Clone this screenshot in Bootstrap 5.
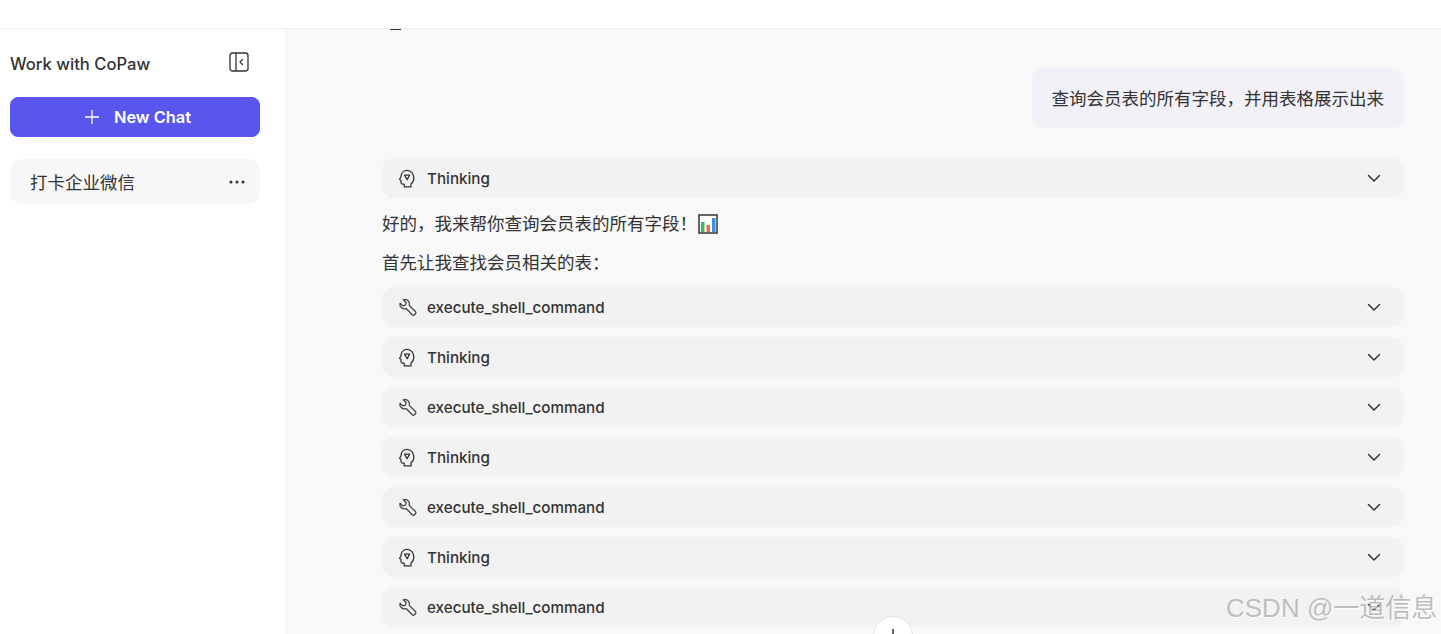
<!DOCTYPE html>
<html lang="zh">
<head>
    <meta charset="UTF-8">
    <meta name="viewport" content="width=device-width, initial-scale=1.0">
    <title>Work with CoPaw</title>
    <link href="https://cdn.jsdelivr.net/npm/bootstrap@5.3.0/dist/css/bootstrap.min.css" rel="stylesheet">
    <style>
        html, body {
            height: 100%;
        }
        body {
            font-family: Inter, "Noto Sans CJK SC", sans-serif;
            color: #333;
            background: #fff;
            overflow: hidden;
        }
        .top-strip {
            height: 29px;
            border-bottom: 1px solid #eeeeee;
        }
        .app-body {
            height: 605px;
        }
        .side-panel {
            width: 285px;
            padding: 0 25px 0 10px;
        }
        .side-head {
            height: 68px;
            padding-right: 10px;
        }
        .side-head svg {
            margin: -2px 1px 0 0;
        }
        .side-title {
            font-size: 16.6px;
            font-weight: 500;
            padding-top: 2px;
        }
        .new-chat {
            height: 40px;
            background: #5a55ee;
            border-color: #5a55ee;
            color: #fff;
            font-size: 16.4px;
            font-weight: 600;
            border-radius: 8px;
            gap: 14px;
        }
        .new-chat:hover {
            background: #5a55ee;
            color: #fff;
        }
        .new-chat svg {
            margin-left: 5px;
        }
        .chat-item {
            height: 45px;
            margin-top: 22px;
            padding: 0 14px 0 20px;
            background: #f7f7f7;
            border-radius: 12px;
            font-size: 17.5px;
        }
        .chat-item span {
            padding-top: 4px;
        }
        .main-panel {
            background: #f8f8f9;
            padding: 0 37px 0 97px;
            overflow: hidden;
        }
        .cut-mark {
            width: 11px;
            height: 1px;
            background: #333;
            margin-left: 8px;
            margin-bottom: 1px;
        }
        .user-bubble {
            height: 60px;
            margin-top: 37px;
            padding: 2px 20px 0;
            background: #f2f1f8;
            border-radius: 12px;
            font-size: 17.5px;
        }
        .tool-row {
            height: 40px;
            margin-bottom: 10px;
            padding: 0 23px 0 16px;
            background: #f2f2f3;
            border-radius: 12px;
            font-size: 15.2px;
            font-weight: 500;
            gap: 10px;
        }
        .tool-row span {
            padding-top: 2px;
        }
        .first-row {
            margin-top: 30px;
            margin-bottom: 14px;
        }
        .reply-line {
            height: 24px;
            margin-bottom: 15px;
            font-size: 17.5px;
            line-height: 24px;
            gap: 1px;
        }
        .reply-line.last-line {
            margin-bottom: 12px;
        }
        .scroll-btn {
            position: absolute;
            left: 873px;
            top: 616px;
            width: 40px;
            height: 40px;
            background: #fff;
            border: 1px solid #e4e4e4;
            border-radius: 50%;
        }
        .watermark {
            position: absolute;
            left: 1226px;
            top: 590px;
            font-family: "Liberation Sans", "Noto Sans CJK SC", sans-serif;
            font-size: 26px;
            line-height: 36px;
            white-space: nowrap;
            color: rgba(170, 170, 170, 0.75);
            text-shadow: 1px 1px 1px rgba(255, 255, 255, 0.9);
        }
    </style>
</head>
<body>
    <svg width="0" height="0" class="position-absolute">
        <symbol id="ic-head" viewBox="0 0 18 18">
            <path d="M12.3 17v-2.900c1.600-1.200 2.700-3 2.700-5.400C15 4.700 12.300 1.300 8.600 1.300 5.200 1.300 3 3.800 2.900 7.100L1.500 9.900l1.300.7v2.300c0 .8.600 1.400 1.400 1.400h1.700V17z" fill="none" stroke="#333" stroke-width="1.200" stroke-linejoin="round"/>
            <path d="M6.200 5.800h4.800L8.600 10.200z" fill="none" stroke="#333" stroke-width="1.200" stroke-linejoin="round"/>
        </symbol>
        <symbol id="ic-wrench" viewBox="0 0 18 18">
            <path d="M6.800 1.400a4.300 4.300 0 0 1 3.800 5.600l5.900 5.800c.6.6.6 1.500 0 2.100l-.9.900c-.6.6-1.500.6-2.100 0L7.700 10a4.300 4.300 0 0 1-5.800-5l2.700 2.500 2.400-.7.7-2.500L5 1.700c.5-.2 1.200-.3 1.800-.3z" fill="none" stroke="#444" stroke-width="1.200" stroke-linejoin="round"/>
        </symbol>
        <symbol id="ic-chevron" viewBox="0 0 14 14">
            <path d="M1.500 4.500 7 10l5.500-5.500" fill="none" stroke="#333" stroke-width="1.500" stroke-linecap="round" stroke-linejoin="round"/>
        </symbol>
    </svg>

    <div class="top-strip"></div>

    <div class="app-body d-flex">
        <aside class="side-panel flex-shrink-0">
            <div class="side-head d-flex align-items-center justify-content-between">
                <span class="side-title">Work with CoPaw</span>
                <svg width="20" height="20" viewBox="0 0 20 20">
                    <rect x="1" y="1" width="18" height="18" rx="2.500" fill="none" stroke="#333" stroke-width="1.300"/>
                    <path d="M7 1v18" stroke="#333" stroke-width="1.300"/>
                    <path d="M13.500 7.500 11 10l2.500 2.500" fill="none" stroke="#333" stroke-width="1.300" stroke-linecap="round" stroke-linejoin="round"/>
                </svg>
            </div>
            <button type="button" class="btn new-chat w-100 d-flex align-items-center justify-content-center p-0">
                <svg width="16" height="16" viewBox="0 0 16 16"><path d="M8 1v14M1 8h14" stroke="#fff" stroke-width="1.300"/></svg>
                <span>New Chat</span>
            </button>
            <div class="chat-item d-flex align-items-center justify-content-between">
                <span>打卡企业微信</span>
                <svg width="18" height="4" viewBox="0 0 18 4">
                    <circle cx="3" cy="2" r="1.500" fill="#333"/><circle cx="9" cy="2" r="1.500" fill="#333"/><circle cx="15" cy="2" r="1.500" fill="#333"/>
                </svg>
            </div>
        </aside>

        <main class="main-panel flex-grow-1">
            <div class="cut-mark"></div>
            <div class="d-flex justify-content-end">
                <div class="user-bubble d-flex align-items-center">查询会员表的所有字段，并用表格展示出来</div>
            </div>

            <div class="tool-row first-row d-flex align-items-center">
                <svg width="19" height="19"><use href="#ic-head"/></svg>
                <span class="flex-grow-1">Thinking</span>
                <svg width="14" height="14"><use href="#ic-chevron"/></svg>
            </div>

            <div class="reply-line d-flex align-items-center">
                <span>好的，我来帮你查询会员表的所有字段！</span>
                <svg width="20" height="20" viewBox="0 0 20 20">
                    <rect x="1" y="1" width="18" height="18" fill="#fff" stroke="#333" stroke-width="1.500"/>
                    <rect x="3" y="8" width="3.500" height="10" fill="#3cb95a"/>
                    <rect x="8.500" y="11" width="3.500" height="7" fill="#ee6a45"/>
                    <rect x="14" y="4" width="3.500" height="14" fill="#3f8fe0"/>
                </svg>
            </div>
            <div class="reply-line last-line">首先让我查找会员相关的表：</div>

            <div class="tool-row d-flex align-items-center">
                <svg width="19" height="19"><use href="#ic-wrench"/></svg>
                <span class="flex-grow-1">execute_shell_command</span>
                <svg width="14" height="14"><use href="#ic-chevron"/></svg>
            </div>
            <div class="tool-row d-flex align-items-center">
                <svg width="19" height="19"><use href="#ic-head"/></svg>
                <span class="flex-grow-1">Thinking</span>
                <svg width="14" height="14"><use href="#ic-chevron"/></svg>
            </div>
            <div class="tool-row d-flex align-items-center">
                <svg width="19" height="19"><use href="#ic-wrench"/></svg>
                <span class="flex-grow-1">execute_shell_command</span>
                <svg width="14" height="14"><use href="#ic-chevron"/></svg>
            </div>
            <div class="tool-row d-flex align-items-center">
                <svg width="19" height="19"><use href="#ic-head"/></svg>
                <span class="flex-grow-1">Thinking</span>
                <svg width="14" height="14"><use href="#ic-chevron"/></svg>
            </div>
            <div class="tool-row d-flex align-items-center">
                <svg width="19" height="19"><use href="#ic-wrench"/></svg>
                <span class="flex-grow-1">execute_shell_command</span>
                <svg width="14" height="14"><use href="#ic-chevron"/></svg>
            </div>
            <div class="tool-row d-flex align-items-center">
                <svg width="19" height="19"><use href="#ic-head"/></svg>
                <span class="flex-grow-1">Thinking</span>
                <svg width="14" height="14"><use href="#ic-chevron"/></svg>
            </div>
            <div class="tool-row d-flex align-items-center">
                <svg width="19" height="19"><use href="#ic-wrench"/></svg>
                <span class="flex-grow-1">execute_shell_command</span>
                <svg width="14" height="14"><use href="#ic-chevron"/></svg>
            </div>
        </main>
    </div>

    <div class="scroll-btn d-flex justify-content-center">
        <svg width="12" height="24" viewBox="0 0 12 24"><path d="M6 12v12" stroke="#333" stroke-width="1.500"/></svg>
    </div>
    <div class="watermark">CSDN @一道信息</div>
</body>
</html>
